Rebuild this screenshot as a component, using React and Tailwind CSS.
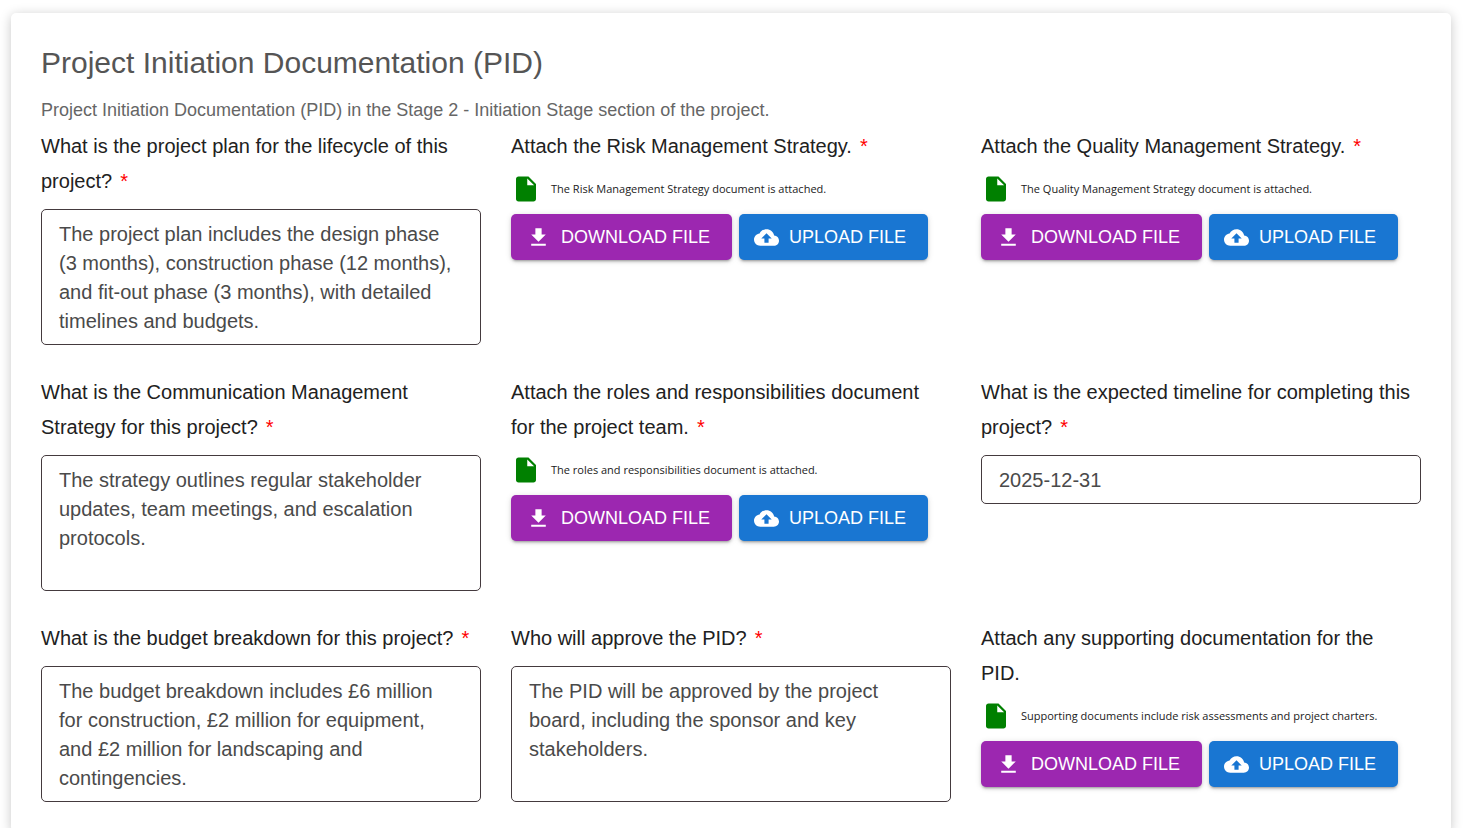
import React from "react";

const fields = [
  {
    id: "project-plan",
    kind: "text",
    label: "What is the project plan for the lifecycle of this project?",
    required: true,
    value:
      "The project plan includes the design phase (3 months), construction phase (12 months), and fit-out phase (3 months), with detailed timelines and budgets.",
  },
  {
    id: "risk-strategy",
    kind: "file",
    label: "Attach the Risk Management Strategy.",
    required: true,
    value: "The Risk Management Strategy document is attached.",
  },
  {
    id: "quality-strategy",
    kind: "file",
    label: "Attach the Quality Management Strategy.",
    required: true,
    value: "The Quality Management Strategy document is attached.",
  },
  {
    id: "communication-strategy",
    kind: "text",
    label: "What is the Communication Management Strategy for this project?",
    required: true,
    value:
      "The strategy outlines regular stakeholder updates, team meetings, and escalation protocols.",
  },
  {
    id: "roles",
    kind: "file",
    label: "Attach the roles and responsibilities document for the project team.",
    required: true,
    value: "The roles and responsibilities document is attached.",
  },
  {
    id: "timeline",
    kind: "line",
    label: "What is the expected timeline for completing this project?",
    required: true,
    value: "2025-12-31",
  },
  {
    id: "budget",
    kind: "text",
    label: "What is the budget breakdown for this project?",
    required: true,
    value:
      "The budget breakdown includes £6 million for construction, £2 million for equipment, and £2 million for landscaping and contingencies.",
  },
  {
    id: "approver",
    kind: "text",
    label: "Who will approve the PID?",
    required: true,
    value:
      "The PID will be approved by the project board, including the sponsor and key stakeholders.",
  },
  {
    id: "supporting-docs",
    kind: "file",
    label: "Attach any supporting documentation for the PID.",
    required: false,
    value: "Supporting documents include risk assessments and project charters.",
  },
];

function Icon({ path, className }) {
  return (
    <svg viewBox="0 0 24 24" fill="currentColor" aria-hidden="true" className={className}>
      <path d={path} />
    </svg>
  );
}

const FILE =
  "M6 2c-1.1 0-1.99.9-1.99 2L4 20c0 1.1.89 2 1.99 2H18c1.1 0 2-.9 2-2V8l-6-6H6zm7 7V3.5L18.5 9H13z";
const DOWNLOAD = "M19 9h-4V3H9v6H5l7 7 7-7zM5 18v2h14v-2H5z";
const CLOUD_UPLOAD =
  "M19.35 10.04C18.67 6.59 15.64 4 12 4 9.11 4 6.6 5.64 5.35 8.04 2.34 8.36 0 10.91 0 14c0 3.31 2.69 6 6 6h13c2.76 0 5-2.24 5-5 0-2.64-2.05-4.78-4.65-4.96zM14 13v4h-4v-4H7l5-5 5 5h-3z";

const buttonBase =
  "flex h-[46px] items-center gap-2.5 whitespace-nowrap rounded-[5px] pl-[15px] pr-5 text-lg font-normal uppercase text-white shadow-[0_3px_2px_-2px_rgba(0,0,0,0.2),0_2px_3px_0_rgba(0,0,0,0.14),0_1px_6px_0_rgba(0,0,0,0.12)]";
const inputBase =
  "block w-full rounded-[5px] border border-[#443a3e] bg-white pb-2 pt-2.5 pl-[17px] pr-6 text-xl leading-[29px] text-[#4a4a4a] outline-none";

function Attachment({ note }) {
  return (
    <>
      <div className="flex items-center gap-2.5">
        <Icon path={FILE} className="size-[30px] shrink-0 text-[#008000]" />
        <p className="font-['Open_Sans',sans-serif] text-[11px] leading-4 text-[#212121]">{note}</p>
      </div>
      <div className="mt-2.5 flex flex-wrap gap-[7px]">
        <button type="button" className={`${buttonBase} min-w-[221px] bg-[#9c27b0]`}>
          <Icon path={DOWNLOAD} className="size-[25px] shrink-0" />
          Download File
        </button>
        <button type="button" className={`${buttonBase} min-w-[189px] bg-[#1976d2]`}>
          <Icon path={CLOUD_UPLOAD} className="size-[25px] shrink-0" />
          Upload File
        </button>
      </div>
    </>
  );
}

function Field({ field }) {
  const isFile = field.kind === "file";
  const Label = isFile ? "h2" : "label";
  return (
    <div>
      <Label
        htmlFor={isFile ? undefined : field.id}
        className="mb-2.5 block pr-2 text-xl font-normal leading-[35px] text-[#212121]"
      >
        {field.label}
        {field.required && <span className="ml-2 leading-5 text-[#ff0000]">*</span>}
      </Label>
      {field.kind === "text" && (
        <textarea
          id={field.id}
          rows={4}
          defaultValue={field.value}
          className={`${inputBase} resize-none overflow-hidden`}
        />
      )}
      {field.kind === "line" && (
        <input id={field.id} type="text" defaultValue={field.value} className={inputBase} />
      )}
      {isFile && <Attachment note={field.value} />}
    </div>
  );
}

export default function App() {
  return (
    <main className="bg-white pb-3 pl-[11px] pr-[14px] pt-[13px] font-['Liberation_Sans',Arial,sans-serif]">
      <form className="rounded-[5px] bg-white p-[30px] shadow-[0_2px_12px_rgba(0,0,0,0.22)]">
        <h1 className="mb-3.5 text-[30px] font-normal leading-10 text-[#555555]">
          Project Initiation Documentation (PID)
        </h1>
        <p className="mb-1.5 text-lg leading-[26px] text-[#666666]">
          Project Initiation Documentation (PID) in the Stage 2 - Initiation Stage section of the
          project.
        </p>
        <div className="grid grid-cols-1 gap-[30px] md:grid-cols-2 xl:grid-cols-3">
          {fields.map((field) => (
            <Field key={field.id} field={field} />
          ))}
        </div>
      </form>
    </main>
  );
}
